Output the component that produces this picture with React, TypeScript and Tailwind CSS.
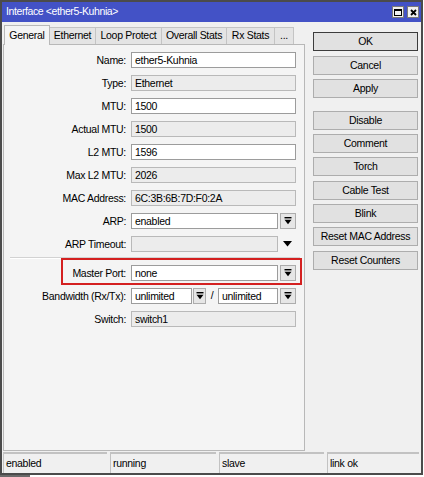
import React from 'react';

type FieldProps = {
    label: string;
    value?: string;
    disabled?: boolean;
    dropdown?: boolean;
    arrow?: boolean;
};

function DropGlyph() {
    return (
        <svg width="8" height="8" viewBox="0 0 8 8">
            <rect x="0.5" y="0" width="7" height="1.4" fill="#000" />
            <path d="M0.5 2.8 H7.5 L4 7.2 Z" fill="#000" />
        </svg>
    );
}

function DropButton({ w = 'w-[16px]' }: { w?: string }) {
    return (
        <div className={`${w} h-[16px] shrink-0 flex items-center justify-center bg-[#e6e6e6] border border-[#adadad]`}>
            <DropGlyph />
        </div>
    );
}

function Input({ value, disabled, w }: { value?: string; disabled?: boolean; w: string }) {
    return (
        <div className={`${w} h-[16px] shrink-0 flex items-center pl-[3px] border ${disabled ? 'bg-[#ececec] border-[#b9b9b9]' : 'bg-white border-[#9c9c9c]'}`}>
            <span className="leading-none">{value}</span>
        </div>
    );
}

function Label({ text }: { text: string }) {
    return <div className="w-[123px] shrink-0 text-right pr-[1px] leading-none">{text}</div>;
}

function Field({ label, value, disabled, dropdown, arrow }: FieldProps) {
    return (
        <div className="flex items-center h-[16px]">
            <Label text={label} />
            <div className="ml-[4px] flex items-center">
                {dropdown ? (
                    <>
                        <Input value={value} disabled={disabled} w="w-[147px]" />
                        <div className="ml-[2px]"><DropButton /></div>
                    </>
                ) : arrow ? (
                    <>
                        <Input value={value} disabled={disabled} w="w-[147px]" />
                        <div className="w-[18px] flex justify-center">
                            <svg width="9" height="6" viewBox="0 0 9 6"><path d="M0 0 H9 L4.5 5.5 Z" fill="#000" /></svg>
                        </div>
                    </>
                ) : (
                    <Input value={value} disabled={disabled} w="w-[165px]" />
                )}
            </div>
        </div>
    );
}

function Btn({ text, primary, mt }: { text: string; primary?: boolean; mt: string }) {
    return (
        <div className={`${mt} h-[19px] w-[105px] flex items-center justify-center bg-[#e1e1e1] border ${primary ? 'border-[#3c3c3c]' : 'border-[#adadad]'}`}>
            {text}
        </div>
    );
}

const tabs = [
    { name: 'General', w: 'w-[46px]' },
    { name: 'Ethernet', w: 'w-[46px]' },
    { name: 'Loop Protect', w: 'w-[66px]' },
    { name: 'Overall Stats', w: 'w-[65px]' },
    { name: 'Rx Stats', w: 'w-[48px]' },
    { name: '...', w: 'w-[19px]' },
];

export default function App() {
    return (
        <div className="w-[424px] h-[477px] bg-white font-['Liberation_Sans',Arial,sans-serif] text-[10.5px] tracking-[-0.3px] text-black">
            <div className="w-[423px] h-[475px] border-2 border-[#4b4b4b] bg-[#f0f0f0] flex flex-col">
                {/* title bar */}
                <div className="h-[20px] bg-[#4352c6] flex items-center justify-between pl-[4px] pr-[2px]">
                    <span className="text-white text-[10.5px] tracking-[-0.4px]">Interface &lt;ether5-Kuhnia&gt;</span>
                    <div className="flex gap-[3px]">
                        <div className="w-[12px] h-[12px] bg-[#f0f0f0] border border-[#7a7a7a] flex items-center justify-center">
                            <div className="w-[8px] h-[7px] border border-black border-t-2" />
                        </div>
                        <div className="w-[12px] h-[12px] bg-[#f0f0f0] border border-[#7a7a7a] flex items-center justify-center">
                            <svg width="7" height="7" viewBox="0 0 7 7"><path d="M1 1 L6 6 M6 1 L1 6" stroke="#000" strokeWidth="1.8" /></svg>
                        </div>
                    </div>
                </div>

                {/* body */}
                <div className="h-[430px] flex pl-[1px]">
                    <div className="w-[302px] flex flex-col">
                        <div className="h-[19px] mt-[3px] flex items-end pl-[1px]">
                            {tabs.map((t, i) =>
                                i === 0 ? (
                                    <div key={t.name} className={`${t.w} h-[20px] -mb-px relative z-10 bg-[#f4f4f4] border border-b-0 border-[#b8b8b8] flex items-center justify-center`}>
                                        {t.name}
                                    </div>
                                ) : (
                                    <div key={t.name} className={`${t.w} h-[17px] bg-[#e4e4e4] border border-l-0 border-b-0 border-[#c4c4c4] flex items-center justify-center`}>
                                        {t.name}
                                    </div>
                                )
                            )}
                        </div>
                        <div className="h-[407px] bg-[#f4f4f4] border border-[#b8b8b8] pt-[7px] flex flex-col">
                            <div className="flex flex-col gap-[7px]">
                                <Field label="Name:" value="ether5-Kuhnia" />
                                <Field label="Type:" value="Ethernet" disabled />
                                <Field label="MTU:" value="1500" />
                                <Field label="Actual MTU:" value="1500" disabled />
                                <Field label="L2 MTU:" value="1596" />
                                <Field label="Max L2 MTU:" value="2026" disabled />
                                <Field label="MAC Address:" value="6C:3B:6B:7D:F0:2A" disabled />
                                <Field label="ARP:" value="enabled" dropdown />
                                <Field label="ARP Timeout:" disabled arrow />
                            </div>
                            <div className="mt-[5px] ml-[6px] w-[290px] h-[2px] border-t border-[#d2d2d2] border-b border-b-white" />
                            <div className="mt-[6px] flex flex-col gap-[7px]">
                                <div className="relative">
                                    <Field label="Master Port:" value="none" dropdown />
                                    <div className="absolute left-[57px] top-[-7px] w-[241px] h-[27px] border-2 border-[#d42020] pointer-events-none" />
                                </div>
                                <div className="flex items-center h-[16px]">
                                    <Label text="Bandwidth (Rx/Tx):" />
                                    <div className="ml-[4px] flex items-center">
                                        <Input value="unlimited" w="w-[61px]" />
                                        <div className="ml-[1px]"><DropButton w="w-[13px]" /></div>
                                        <div className="w-[12px] text-center">/</div>
                                        <Input value="unlimited" w="w-[60px]" />
                                        <div className="ml-[2px]"><DropButton /></div>
                                    </div>
                                </div>
                                <Field label="Switch:" value="switch1" disabled />
                            </div>
                        </div>
                    </div>

                    <div className="ml-[8px] flex flex-col pt-[10px]">
                        <Btn text="OK" primary mt="mt-0" />
                        <Btn text="Cancel" mt="mt-[5px]" />
                        <Btn text="Apply" mt="mt-[4px]" />
                        <Btn text="Disable" mt="mt-[13px]" />
                        <Btn text="Comment" mt="mt-[4px]" />
                        <Btn text="Torch" mt="mt-[4px]" />
                        <Btn text="Cable Test" mt="mt-[5px]" />
                        <Btn text="Blink" mt="mt-[4px]" />
                        <Btn text="Reset MAC Address" mt="mt-[4px]" />
                        <Btn text="Reset Counters" mt="mt-[5px]" />
                    </div>
                </div>

                {/* status bar */}
                <div className="h-[21px] flex gap-[3px] pl-[1px]">
                    {[
                        { t: 'enabled', w: 'w-[104px]' },
                        { t: 'running', w: 'w-[106px]' },
                        { t: 'slave', w: 'w-[105px]' },
                        { t: 'link ok', w: 'w-[92px]' },
                    ].map((c) => (
                        <div key={c.t} className={`${c.w} h-[21px] border-t-2 border-l border-[#c2c2c2] flex items-center pl-[2px]`}>
                            {c.t}
                        </div>
                    ))}
                </div>
            </div>
            <div className="h-[2px] w-[30px] bg-[#6a6a6a]" />
        </div>
    );
}
